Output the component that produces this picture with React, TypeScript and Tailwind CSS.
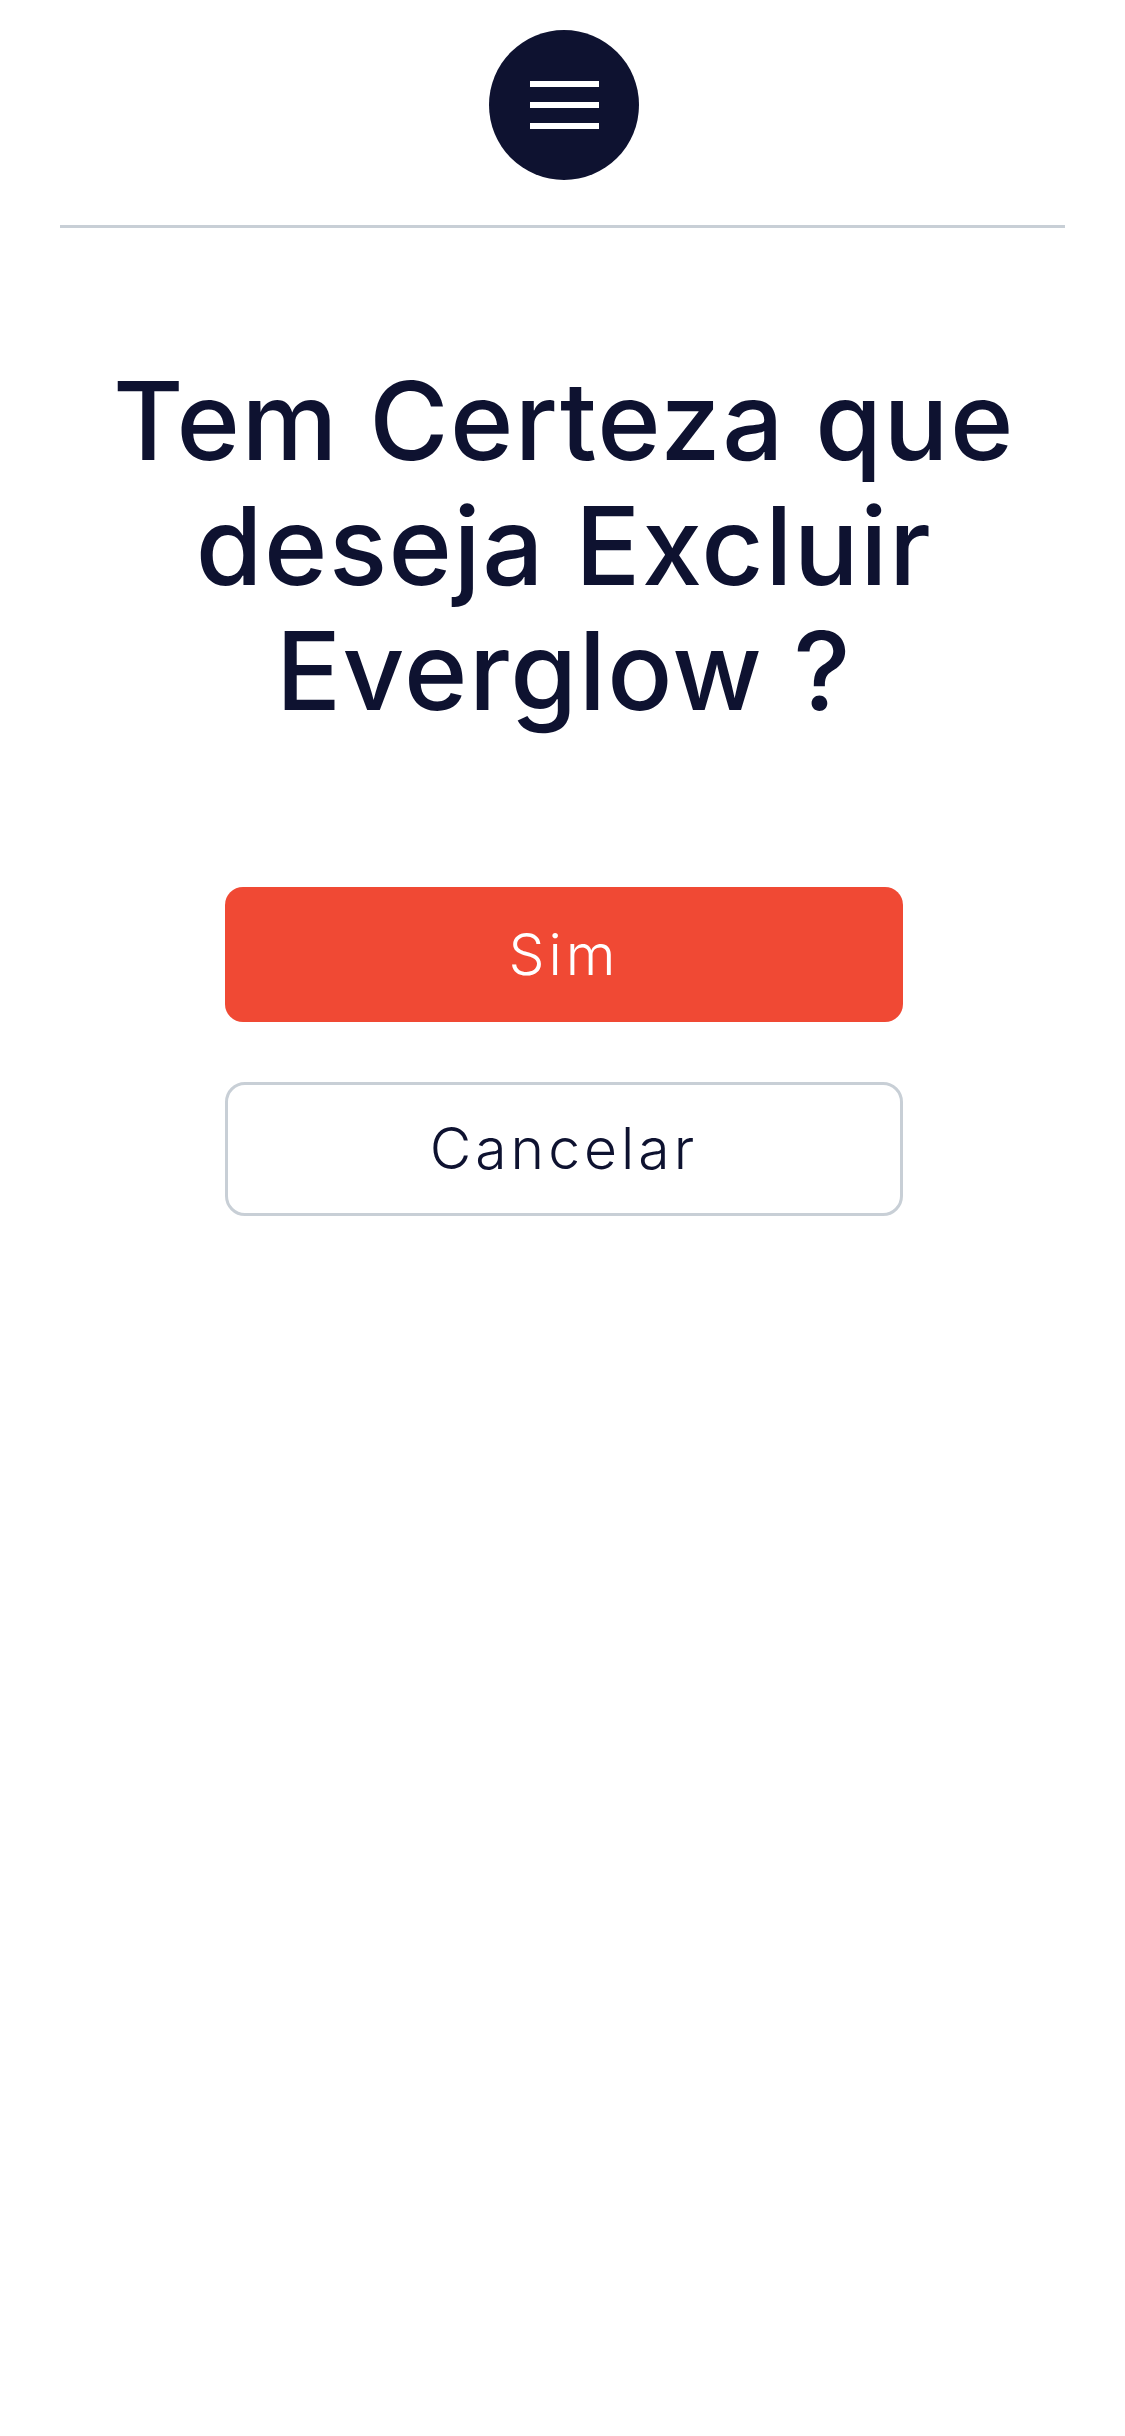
import React from "react";

export default function App() {
  return (
    <div className="min-h-[2436px] w-full bg-white flex flex-col items-center" style={{ fontFamily: "Inter, 'Noto Sans', sans-serif" }}>
      <div className="pt-[30px] flex justify-center w-full">
        <button className="w-[150px] h-[150px] rounded-full bg-[#0e1230] flex flex-col items-center justify-center gap-[15px] ml-[3px]">
          <span className="block w-[69px] h-[6px] bg-white" />
          <span className="block w-[69px] h-[6px] bg-white" />
          <span className="block w-[69px] h-[6px] bg-white" />
        </button>
      </div>
      <div className="mt-[45px] w-[1005px] h-[3px] bg-[#c8cfd6]" />
      <h1 className="mt-[130px] w-[960px] text-center text-[#0e1230] text-[108px] leading-[125px] font-medium tracking-[1.5px] ml-[3px]">
        Tem Certeza que deseja Excluir Everglow ?
      </h1>
      <div className="mt-[154px] w-[678px] flex flex-col gap-[60px] ml-[3px]">
        <button className="h-[135px] w-full rounded-[18px] bg-[#f04934] text-white text-[57px] font-light tracking-[4px]">
          Sim
        </button>
        <button className="h-[134px] w-full rounded-[20px] border-[3px] border-[#c8cfd6] bg-white text-[#0e1230] text-[57px] font-light tracking-[4px]">
          Cancelar
        </button>
      </div>
    </div>
  );
}
